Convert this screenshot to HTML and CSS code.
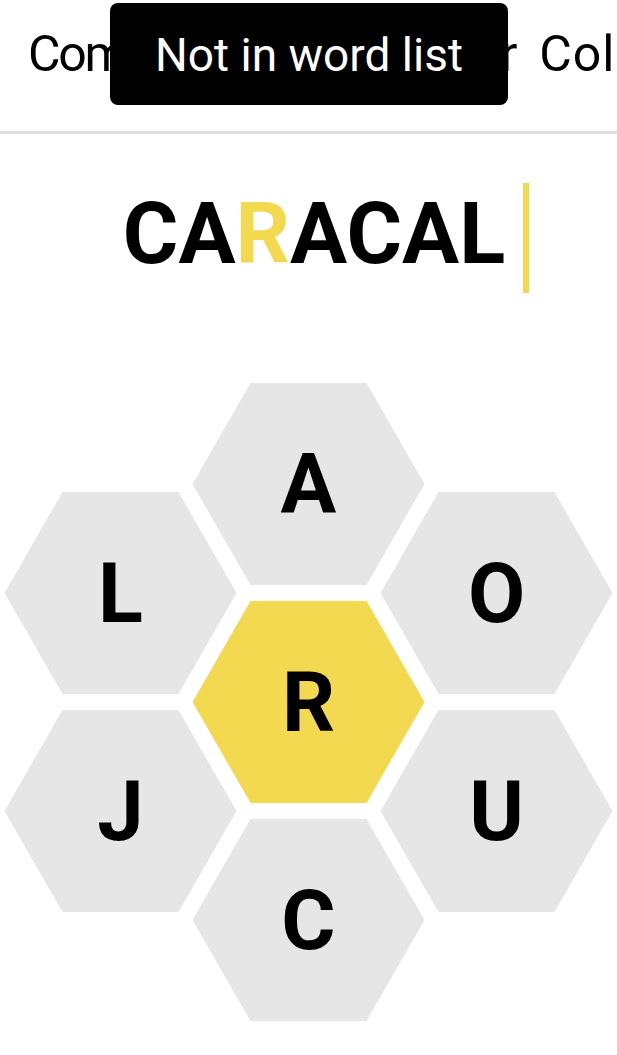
FILE: index.html
```html
<!DOCTYPE html>
<html lang="en">
<head>
<meta charset="utf-8">
<title>Spelling Bee</title>
<link rel="stylesheet" href="styles.css">
</head>
<body>
<header class="nav">
  <nav class="nav-links">
    <span class="nav-link">Community Word Solver</span>
    <span class="nav-link nav-link-wide">Colors</span>
  </nav>
  <div class="toast">Not in word list</div>
</header>
<main class="game">
  <div class="input">
    <span class="word">CA<span class="center-letter">R</span>ACAL</span>
    <span class="cursor"></span>
  </div>
  <div class="hive">
    <div class="col side">
      <div class="cell">L</div>
      <div class="cell">J</div>
    </div>
    <div class="col">
      <div class="cell">A</div>
      <div class="cell center">R</div>
      <div class="cell">C</div>
    </div>
    <div class="col side">
      <div class="cell">O</div>
      <div class="cell">U</div>
    </div>
  </div>
</main>
</body>
</html>
```
FILE: styles.css
```css
* { box-sizing: border-box; }
html, body {
  margin: 0;
  padding: 0;
  background: #fff;
  font-family: Roboto, "Liberation Sans", Arial, sans-serif;
  color: #000;
}
.nav {
  position: relative;
  height: 134px;
  border-bottom: 3px solid #dfdfdf;
  overflow: hidden;
}
.nav-links {
  display: flex;
  gap: 24px;
  padding: 29px 0 0 28px;
  white-space: nowrap;
  font-size: 50px;
  line-height: 1;
  letter-spacing: -2.3px;
}
.nav-link { flex: none; }
.nav-link-wide { letter-spacing: 1px; }
.toast {
  position: absolute;
  left: 110px;
  top: 3px;
  width: 398px;
  height: 102px;
  border-radius: 8px;
  background: #000;
  color: #fff;
  font-size: 46px;
  line-height: 1;
  display: flex;
  align-items: center;
  justify-content: center;
  padding-top: 2px;
}
.input {
  display: flex;
  align-items: center;
  justify-content: center;
  gap: 18px;
  height: 110px;
  margin-top: 49px;
  padding-left: 35px;
}
.word {
  font-size: 85px;
  font-weight: 700;
  line-height: 1;
  margin-bottom: 8px;
}
.center-letter { color: #f3d950; }
.cursor {
  width: 6px;
  height: 110px;
  background: #f3d950;
}
.hive {
  display: flex;
  justify-content: center;
  margin-top: 90px;
}
.col {
  display: flex;
  flex-direction: column;
  gap: 16px;
}
.col + .col { margin-left: -44px; }
.col.side { margin-top: 109px; }
.cell {
  width: 232px;
  height: 202px;
  background: #e6e6e6;
  clip-path: polygon(25% 0, 75% 0, 100% 50%, 75% 100%, 25% 100%, 0 50%);
  display: flex;
  align-items: center;
  justify-content: center;
  font-size: 83px;
  font-weight: 700;
  line-height: 1;
}
.cell.center { background: #f3d950; }
```
